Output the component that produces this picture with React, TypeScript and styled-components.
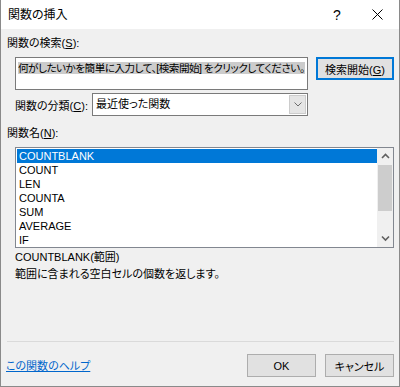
import React from "react";
import styled, { createGlobalStyle } from "styled-components";

const GlobalStyle = createGlobalStyle`
    html, body {
        margin: 0;
        padding: 0;
        background: #ffffff;
    }
    body {
        font-family: "Liberation Sans", "Noto Sans CJK JP", sans-serif;
        font-size: 11px;
        color: #000000;
        font-feature-settings: "palt";
    }
`;

const Janela = styled.div`
    width: 400px;
    height: 387px;
    box-sizing: border-box;
    border: 1px solid #8a8a8a;
    border-top: none;
    background: #f0f0f0;
    display: flex;
    flex-direction: column;
`;

const BarraTitulo = styled.div`
    height: 29px;
    flex-shrink: 0;
    background: #ffffff;
    display: flex;
    align-items: center;
    padding-left: 7px;
`;

const TextoTitulo = styled.div`
    flex: 1;
    font-size: 12px;
    line-height: 14px;
`;

const BotaoTitulo = styled.div<{ $largura: number }>`
    width: ${(p) => p.$largura}px;
    height: 29px;
    display: flex;
    align-items: center;
    justify-content: center;
    font-size: 14px;
`;

const Corpo = styled.div`
    flex: 1;
    display: flex;
    flex-direction: column;
    padding: 0 5px 9px 6px;
`;

const Rotulo = styled.div<{ $recuo?: boolean; $topo: number }>`
    height: 14px;
    line-height: 14px;
    margin-top: ${(p) => p.$topo}px;
    padding-left: ${(p) => (p.$recuo ? 8 : 0)}px;
    white-space: nowrap;
`;

const Atalho = styled.span`
    text-decoration: underline;
    text-underline-offset: 1px;
`;

const LinhaBusca = styled.div`
    display: flex;
    align-items: flex-start;
    gap: 8px;
    margin-top: 7px;
    padding-left: 8px;
`;

const CaixaBusca = styled.div`
    width: 293px;
    height: 33px;
    box-sizing: border-box;
    border: 1px solid #7a7a7a;
    background: #ffffff;
    padding: 4px 2px;
    overflow: hidden;
`;

const TextoMarcado = styled.span`
    background: #cccccc;
    font-size: 10.6px;
    line-height: 12px;
    white-space: nowrap;
    letter-spacing: -0.5px;
`;

const Botao = styled.button<{ $largura: number; $padrao?: boolean }>`
    width: ${(p) => p.$largura}px;
    height: 23px;
    box-sizing: border-box;
    padding: 0;
    font: inherit;
    color: #000000;
    background: #e1e1e1;
    border: 1px solid ${(p) => (p.$padrao ? "#0078d7" : "#adadad")};
    box-shadow: ${(p) => (p.$padrao ? "inset 0 0 0 1px #0078d7" : "none")};
`;

const LinhaCategoria = styled.div`
    display: flex;
    align-items: center;
    height: 23px;
    margin-top: 3px;
    padding-left: 8px;
`;

const RotuloCategoria = styled.div`
    width: 77px;
    white-space: nowrap;
`;

const Selecao = styled.div`
    width: 216px;
    height: 23px;
    box-sizing: border-box;
    border: 1px solid #7a7a7a;
    background: #ffffff;
    display: flex;
`;

const TextoSelecao = styled.div`
    flex: 1;
    padding-left: 3px;
    line-height: 21px;
`;

const SetaSelecao = styled.div`
    width: 15px;
    margin: 1px;
    background: #e5e5e5;
    border: 1px solid #cccccc;
    display: flex;
    align-items: center;
    justify-content: center;
`;

const Lista = styled.div`
    width: 379px;
    height: 101px;
    box-sizing: border-box;
    margin: 7px 0 0 8px;
    border: 1px solid #828790;
    background: #ffffff;
    display: flex;
`;

const Itens = styled.div`
    flex: 1;
    padding: 1px 0 0 1px;
`;

const Item = styled.div<{ $selecionado?: boolean }>`
    height: 14px;
    line-height: 14px;
    padding-left: 2px;
    background: ${(p) => (p.$selecionado ? "#0078d7" : "transparent")};
    color: ${(p) => (p.$selecionado ? "#ffffff" : "#000000")};
`;

const Rolagem = styled.div`
    width: 16px;
    background: #f0f0f0;
    display: flex;
    flex-direction: column;
`;

const BotaoRolagem = styled.div`
    height: 17px;
    display: flex;
    align-items: center;
    justify-content: center;
`;

const Polegar = styled.div`
    height: 46px;
    margin: 0 1px;
    background: #cdcdcd;
`;

const Espaco = styled.div`
    flex: 1;
`;

const Separador = styled.div`
    height: 1px;
    margin-top: auto;
    background: #dadada;
`;

const Rodape = styled.div`
    display: flex;
    align-items: center;
    gap: 9px;
    margin-top: 12px;
`;

const LinkAjuda = styled.a`
    flex: 1;
    margin-left: -1px;
    color: #0066cc;
    text-decoration: underline;
    line-height: 14px;
`;

function Chevron({ para }: { para: "cima" | "baixo" }) {
    const d = para === "cima" ? "M1 5 L4.5 1.5 L8 5" : "M1 1.5 L4.5 5 L8 1.5";
    return (
        <svg width="9" height="7" viewBox="0 0 9 7">
            <path d={d} fill="none" stroke="#606060" strokeWidth="1.6" />
        </svg>
    );
}

const funcoes = ["COUNTBLANK", "COUNT", "LEN", "COUNTA", "SUM", "AVERAGE", "IF"];

export default function App() {
    return (
        <>
            <GlobalStyle />
            <Janela>
                <BarraTitulo>
                    <TextoTitulo>関数の挿入</TextoTitulo>
                    <BotaoTitulo $largura={38}>?</BotaoTitulo>
                    <BotaoTitulo $largura={43}>
                        <svg width="11" height="11" viewBox="0 0 11 11">
                            <path d="M0.5 0.5 L10.5 10.5 M10.5 0.5 L0.5 10.5" stroke="#000" strokeWidth="1" />
                        </svg>
                    </BotaoTitulo>
                </BarraTitulo>
                <Corpo>
                    <Rotulo $topo={7}>
                        関数の検索(<Atalho>S</Atalho>):
                    </Rotulo>
                    <LinhaBusca>
                        <CaixaBusca>
                            <TextoMarcado>
                                何がしたいかを簡単に入力して、[検索開始] をクリックしてください。
                            </TextoMarcado>
                        </CaixaBusca>
                        <Botao $largura={78} $padrao>
                            検索開始(<Atalho>G</Atalho>)
                        </Botao>
                    </LinhaBusca>
                    <LinhaCategoria>
                        <RotuloCategoria>
                            関数の分類(<Atalho>C</Atalho>):
                        </RotuloCategoria>
                        <Selecao>
                            <TextoSelecao>最近使った関数</TextoSelecao>
                            <SetaSelecao>
                                <svg width="8" height="5" viewBox="0 0 8 5">
                                    <path d="M0.5 0.5 L4 4 L7.5 0.5" fill="none" stroke="#6d6d6d" strokeWidth="1" />
                                </svg>
                            </SetaSelecao>
                        </Selecao>
                    </LinhaCategoria>
                    <Rotulo $topo={10}>
                        関数名(<Atalho>N</Atalho>):
                    </Rotulo>
                    <Lista>
                        <Itens>
                            {funcoes.map((f, i) => (
                                <Item key={f} $selecionado={i === 0}>
                                    {f}
                                </Item>
                            ))}
                        </Itens>
                        <Rolagem>
                            <BotaoRolagem>
                                <Chevron para="cima" />
                            </BotaoRolagem>
                            <Polegar />
                            <Espaco />
                            <BotaoRolagem>
                                <Chevron para="baixo" />
                            </BotaoRolagem>
                        </Rolagem>
                    </Lista>
                    <Rotulo $recuo $topo={2}>
                        COUNTBLANK(範囲)
                    </Rotulo>
                    <Rotulo $recuo $topo={3}>
                        範囲に含まれる空白セルの個数を返します。
                    </Rotulo>
                    <Separador />
                    <Rodape>
                        <LinkAjuda href="#">この関数のヘルプ</LinkAjuda>
                        <Botao $largura={69}>OK</Botao>
                        <Botao $largura={69}>キャンセル</Botao>
                    </Rodape>
                </Corpo>
            </Janela>
        </>
    );
}
